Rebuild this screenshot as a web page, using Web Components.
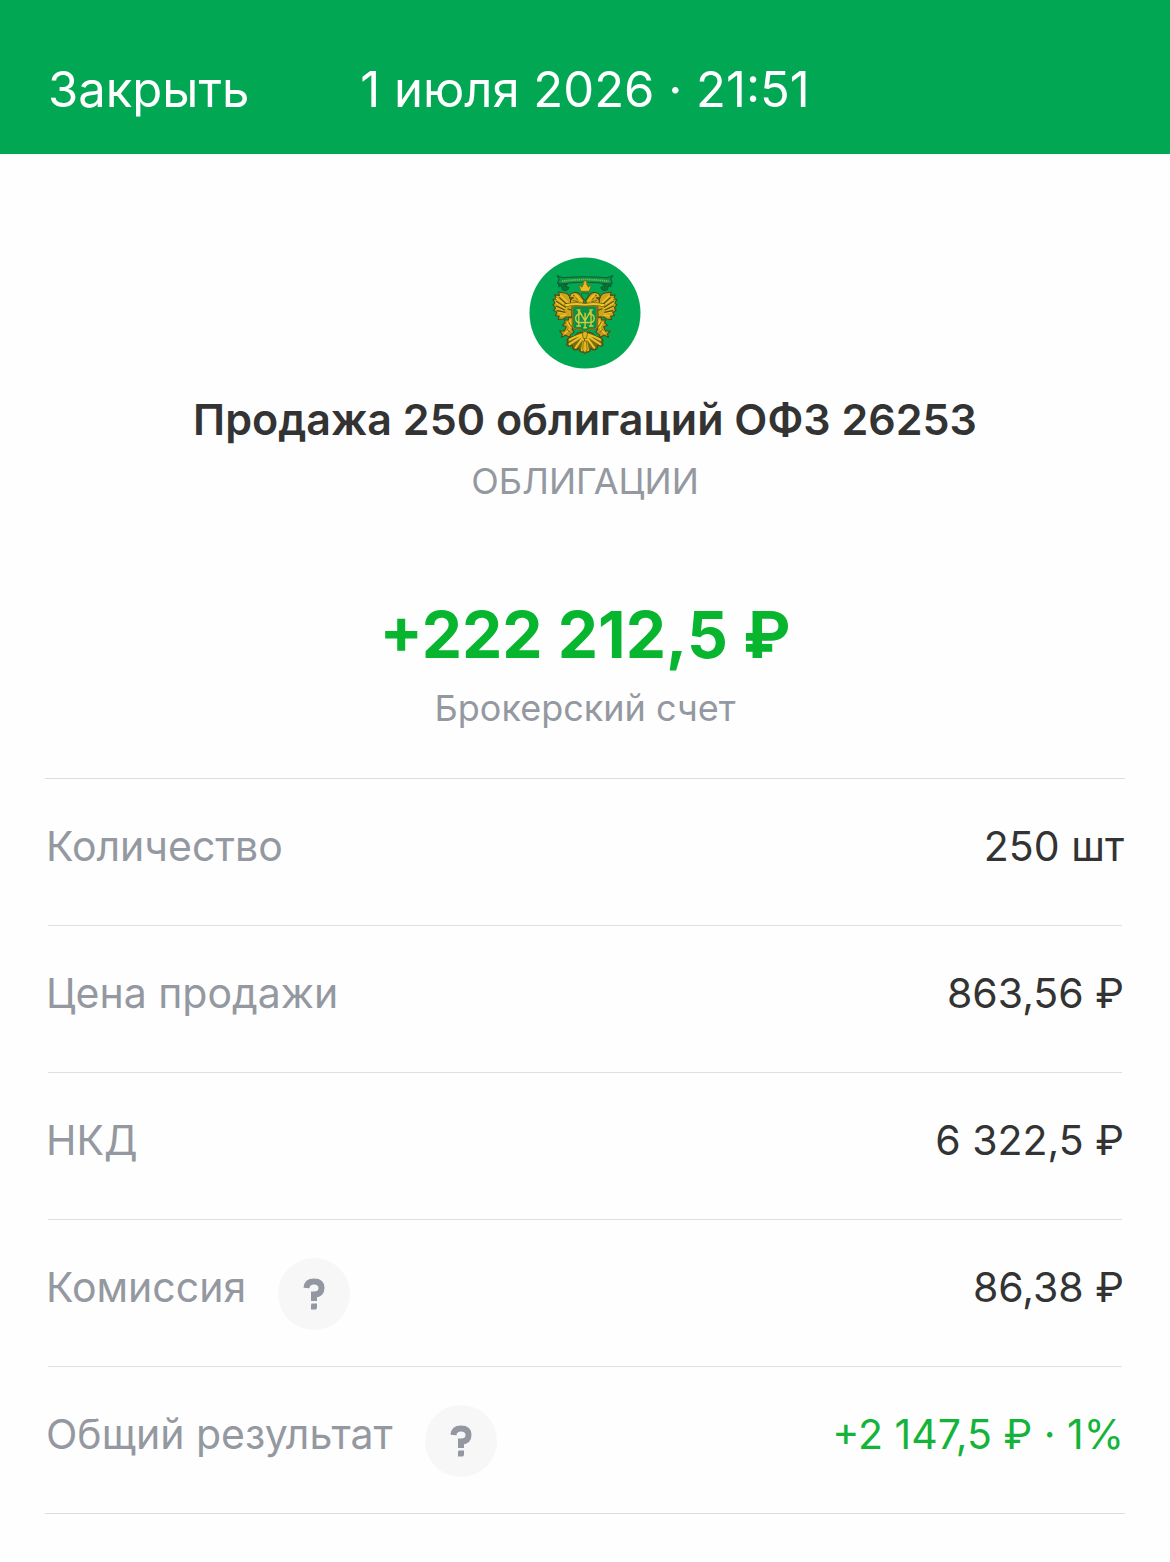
<!DOCTYPE html>
<html lang="ru">
<head>
<meta charset="utf-8">
<meta name="viewport" content="width=device-width, initial-scale=1">
<title>Продажа облигаций</title>
<style>
  body {
    margin: 0;
    background: #fefefe;
    color: #333333;
    font-family: Inter, "Liberation Sans", sans-serif;
  }
</style>
</head>
<body>
<deal-header>
  <span slot="action">Закрыть</span>
  1 июля 2026 · 21:51
</deal-header>

<deal-summary>
  <bond-emblem slot="logo"></bond-emblem>
  <span slot="title">Продажа 250 облигаций ОФЗ 26253</span>
  <span slot="kind">ОБЛИГАЦИИ</span>
  <span slot="amount">+222 212,5 ₽</span>
  <span slot="account">Брокерский счет</span>
</deal-summary>

<deal-list>
  <deal-row label="Количество">250 шт</deal-row>
  <deal-row label="Цена продажи">863,56 ₽</deal-row>
  <deal-row label="НКД">6 322,5 ₽</deal-row>
  <deal-row label="Комиссия" hint>86,38 ₽</deal-row>
  <deal-row label="Общий результат" hint positive>+2 147,5 ₽ · 1%</deal-row>
</deal-list>

<template id="header-template">
  <style>
    :host {
      display: block;
      background: #02a753;
      color: #fff;
    }
    header {
      display: grid;
      grid-template-columns: 1fr auto 1fr;
      align-items: center;
      padding: 60px 48px 34px;
      font-size: 49px;
      line-height: 60px;
    }
    button {
      justify-self: start;
      padding: 0;
      border: 0;
      background: none;
      color: inherit;
      font: inherit;
      cursor: pointer;
    }
    h1 {
      margin: 0;
      font: inherit;
    }
  </style>
  <header>
    <button type="button"><slot name="action"></slot></button>
    <h1><slot></slot></h1>
  </header>
</template>

<template id="emblem-template">
  <style>
    :host {
      display: block;
      width: 112px;
      height: 112px;
    }
    svg {
      display: block;
      width: 100%;
      height: 100%;
    }
  </style>
  <svg viewBox="26.5 26.5 336 336" aria-hidden="true">
    <defs>
      <g id="half" stroke="#4d4a12" stroke-width="3" stroke-linejoin="round">
        <!-- wing -->
        <path fill="#cfa31c" d="M158 168 L150 146 Q144 136 132 136 L119 134 L122 144 L108 142 L113 154 L103 155 L110 166 L103 170 L111 179 L105 186 L115 192 L110 201 L121 203 L118 212 L132 211 L141 205 L157 206 Z"/>
        <path fill="none" stroke="#efc524" stroke-width="4" d="M124 143 L145 164 M112 151 L143 173 M110 164 L141 181 M112 178 L139 188 M117 191 L139 194 M124 202 L142 199"/>
        <path fill="none" stroke-width="3" d="M121 149 L143 169 M112 160 L140 178 M112 174 L138 186 M114 187 L139 192 M145 182 L157 186"/>
        <!-- neck and head -->
        <path fill="#d3a61b" d="M190 168 Q174 169 154 167 Q150 154 162 150 L151 150 Q150 139 162 136 Q174 132 181 143 L192 158 Z"/>
        <path fill="none" stroke="#efc524" stroke-width="4" d="M158 143 Q170 139 176 151 L186 161"/>
        <path fill="none" stroke-width="2" d="M160 158 L176 162 M168 150 L174 157"/>
        <circle cx="163" cy="144" r="2" fill="#403b10" stroke="none"/>
        <!-- paw -->
        <path fill="#c49a1b" d="M158 207 L149 205 L147 214 L136 213 L138 222 L130 229 L141 233 L136 245 L122 245 L130 254 L127 263 L140 257 L150 263 L154 255 L163 249 L158 240 L164 230 Z"/>
        <path fill="none" stroke="#efc524" stroke-width="4" d="M151 212 L155 229 M143 220 L153 236 M152 239 L136 253"/>
        <path fill="none" stroke-width="2" d="M148 220 L157 234 M144 240 L152 250"/>
        <!-- tail feathers -->
        <path fill="#776b17" d="M188 248 L174 251 L164 260 L151 264 Q138 271 146 278 Q137 286 149 289 L158 286 Q158 301 172 299 L177 294 Q178 306 190 306 L195 309 V248 Z"/>
        <path fill="none" stroke="#eec123" stroke-width="6" stroke-linecap="round" d="M186 255 Q168 260 151 270 M186 260 L151 283 M189 264 L168 293 M192 268 L186 300"/>
      </g>
    </defs>
    <circle cx="194.500" cy="194.500" r="166.500" fill="#02a753"/>
    <g transform="translate(-10 -9) scale(1.05)">
      <use href="#half"/>
      <use href="#half" transform="translate(389 0) scale(-1 1)"/>
      <!-- ribbon -->
      <path fill="#04753b" stroke="#125c32" stroke-width="3" stroke-linejoin="round" d="M120 108 V119 L127 115 L130 127 Q144 134 149 121 L137 116 L145 111 Z M269 108 V119 L262 115 L259 127 Q245 134 240 121 L252 116 L244 111 Z"/>
      <path fill="#07994f" stroke="#125c32" stroke-width="3" stroke-linejoin="round" d="M115 87 L131 93 Q195 88 258 93 L274 87 L268 97 L273 109 L263 111 Q195 101 126 111 L116 109 L121 97 Z"/>
      <path fill="none" stroke="#7fb848" stroke-width="5" stroke-dasharray="4 2" d="M129 103 Q195 94 262 103"/>
      <!-- crown -->
      <path fill="#e9bd20" stroke="#6b6212" stroke-width="2" d="M183 132 L177 113 L186 120 L191 110 L187 106 H192 V101 H198 V106 H202 L199 110 L204 120 L213 113 L207 132 Z"/>
      <path fill="#02a753" stroke="#4d4a12" stroke-width="2" d="M184 137 H206 L202 149 L195 157 L187 149 Z"/>
      <!-- shield -->
      <path fill="#07934a" stroke="#4d5a18" stroke-width="5" stroke-linejoin="round" d="M160 174 H229 V231 Q229 239 220 240 H207 L195 250 L182 240 H169 Q160 239 160 231 Z"/>
      <path fill="none" stroke="#b9a41f" stroke-width="2" stroke-linejoin="round" d="M160 174 H229 V231 Q229 239 220 240 H207 L195 250 L182 240 H169 Q160 239 160 231 Z"/>
      <path fill="none" stroke="#4d4a12" stroke-width="9" d="M137 172 Q165 166 195 170 Q224 166 252 172"/>
      <path fill="none" stroke="#efc524" stroke-width="6" d="M138 172 Q165 166 195 170 Q224 166 251 172"/>
      <!-- monogram -->
      <path fill="none" stroke="#d9c838" stroke-width="4" d="M177 185 V231 M212 185 V231 M171 185 H182 M207 185 H218 M170 231 H183 M206 231 H219 M177 186 L195 216 L212 186 M195 193 V236 M190 236 H200 M186 197 Q168 195 168 209 Q168 223 186 221 H203 Q221 223 221 209 Q221 195 203 197"/>
      <!-- clasp between shield and tail -->
      <path fill="#e4b61a" stroke="#5b5713" stroke-width="2" d="M187 251 L195 246 L202 251 L199 267 H190 Z M190 274 H199 L201 299 L195 308 L188 299 Z"/>
    </g>
  </svg>
</template>

<template id="summary-template">
  <style>
    :host {
      display: flex;
      flex-direction: column;
      align-items: center;
      padding: 103px 44px 48px;
      text-align: center;
    }
    h2, p {
      margin: 0;
    }
    h2 {
      margin-top: 24px;
      font-size: 43px;
      font-weight: 600;
      line-height: 52px;
    }
    .caption {
      color: #9498a0;
      font-size: 36px;
      line-height: 44px;
    }
    .kind {
      margin-top: 14px;
    }
    .amount {
      margin-top: 92px;
      color: #08b52f;
      font-size: 64px;
      font-weight: 700;
      line-height: 80px;
    }
    .account {
      margin-top: 11px;
    }
  </style>
  <slot name="logo"></slot>
  <h2><slot name="title"></slot></h2>
  <p class="caption kind"><slot name="kind"></slot></p>
  <p class="amount"><slot name="amount"></slot></p>
  <p class="caption account"><slot name="account"></slot></p>
</template>

<template id="list-template">
  <style>
    :host {
      display: block;
      margin: 0 45px;
      border-top: 1px solid #dcdddf;
      border-bottom: 1px solid #dcdddf;
    }
    ::slotted(deal-row:not(:last-child))::after {
      content: "";
      display: block;
      height: 1px;
      margin: 0 3px;
      background: #dfe0e2;
    }
  </style>
  <slot></slot>
</template>

<template id="row-template">
  <style>
    :host {
      display: block;
      font-size: 41px;
      line-height: 58px;
    }
    dl {
      display: flex;
      justify-content: space-between;
      min-height: 72px;
      margin: 0;
      padding: 38px 1px 36px;
    }
    dt {
      display: flex;
      gap: 32px;
      color: #9498a0;
    }
    dd {
      margin: 0;
      text-align: right;
    }
    :host([positive]) dd {
      color: #14b33a;
    }
    button {
      display: grid;
      place-items: center;
      width: 72px;
      height: 72px;
      padding: 0;
      border: 0;
      border-radius: 50%;
      background: #f7f7f7;
      cursor: pointer;
    }
    :host(:not([hint])) button {
      display: none;
    }
    svg {
      width: 24px;
      height: 34px;
    }
  </style>
  <dl>
    <dt>
      <span></span>
      <button type="button">
        <svg viewBox="0 0 24 34" aria-hidden="true">
          <path d="M4.500 11 Q5 4.500 12 4.500 Q19.500 4.500 19.500 11 Q19.500 17.500 12 17.500 V24" fill="none" stroke="#9297a1" stroke-width="6"/>
          <path d="M9.500 26.500 H15 V31 L14 32.500 H9 V28 Z" fill="#9297a1"/>
        </svg>
      </button>
    </dt>
    <dd><slot></slot></dd>
  </dl>
</template>

<script>
  // Clone the template into an open shadow root
  function attach(el, id) {
    el.attachShadow({ mode: 'open' })
    el.shadowRoot.appendChild(document.getElementById(id).content.cloneNode(true))
  }

  class DealHeader extends HTMLElement {
    constructor() {
      super()
      attach(this, 'header-template')
    }
  }

  class BondEmblem extends HTMLElement {
    constructor() {
      super()
      attach(this, 'emblem-template')
    }
  }

  class DealSummary extends HTMLElement {
    constructor() {
      super()
      attach(this, 'summary-template')
    }
  }

  class DealList extends HTMLElement {
    constructor() {
      super()
      attach(this, 'list-template')
    }
  }

  class DealRow extends HTMLElement {
    constructor() {
      super()
      attach(this, 'row-template')
      const label = this.getAttribute('label')
      this.shadowRoot.querySelector('dt span').textContent = label
      this.shadowRoot.querySelector('button').setAttribute('aria-label', label)
    }
  }

  window.customElements.define('deal-header', DealHeader)
  window.customElements.define('bond-emblem', BondEmblem)
  window.customElements.define('deal-summary', DealSummary)
  window.customElements.define('deal-list', DealList)
  window.customElements.define('deal-row', DealRow)
</script>
</body>
</html>
